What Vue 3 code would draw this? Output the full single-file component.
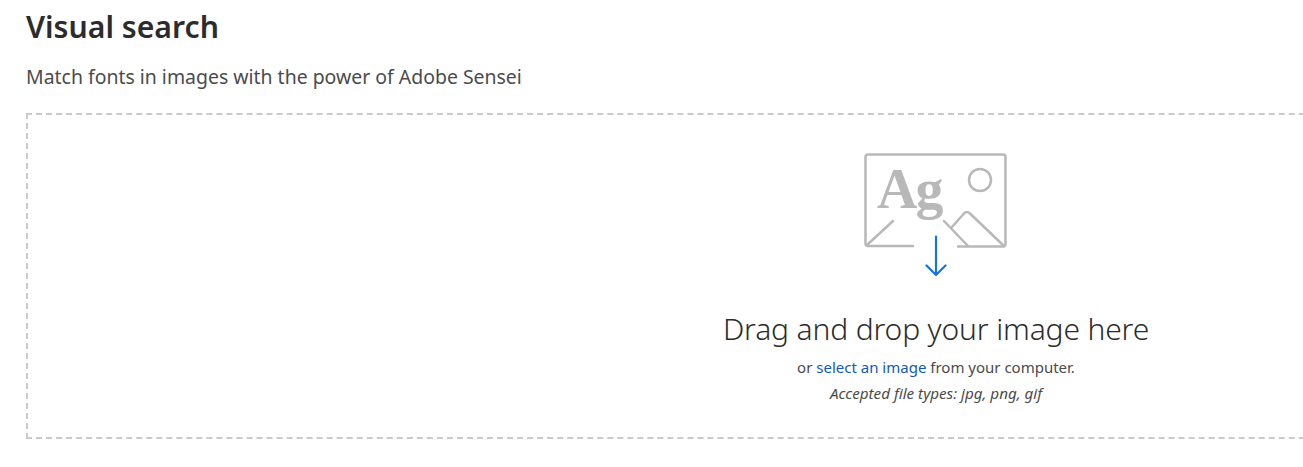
<script setup>
const fileTypes = "jpg, png, gif";
</script>

<template>
  <main class="page">
    <h1 class="title">Visual search</h1>
    <p class="subtitle">Match fonts in images with the power of Adobe Sensei</p>
    <section class="dropzone">
      <svg class="drop-icon" width="144" height="126" viewBox="864 153 144 126" fill="none">
        <g stroke="#b8b8b8" stroke-width="2.5" stroke-linecap="round" stroke-linejoin="round">
          <path d="M913 246H868a2.5 2.5 0 0 1-2.500-2.500V157a2.500 2.500 0 0 1 2.500-2.500H1003a2.500 2.500 0 0 1 2.500 2.500V244a2.500 2.500 0 0 1-2.500 2.500H958" />
          <circle cx="980" cy="180" r="11" />
          <path d="M867 245L893 221" />
          <path d="M944 221L968 246" />
          <path d="M952 227L964 213.500Q967 210.500 970 213.500L1004 246" />
        </g>
        <text class="icon-text" x="877" y="208">Ag</text>
        <path d="M936 236.500V275M926.500 265.500L936 275L945.500 265.500" stroke="#1473e6" stroke-width="2.200" stroke-linecap="round" stroke-linejoin="round" />
      </svg>
      <h2 class="headline">Drag and drop your image here</h2>
      <p class="line">or <a class="link" href="#">select an image</a> from your computer.</p>
      <p class="line types">Accepted file types: {{ fileTypes }}</p>
    </section>
  </main>
</template>

<style scoped>
.page {
  padding: 0 0 0 26px;
  width: 100vw;
  height: 100vh;
  overflow: hidden;
  box-sizing: border-box;
  font-family: "Noto Sans", "Open Sans", sans-serif;
  color: #2c2c2c;
}
.title {
  margin: 0;
  padding-top: 7px;
  font-size: 30.200px;
  line-height: 40px;
  font-weight: 600;
}
.subtitle {
  margin: 17px 0 0;
  font-size: 19.460px;
  line-height: 26px;
  color: #4b4b4b;
}
.dropzone {
  margin-top: 23px;
  width: 1820px;
  height: 326px;
  box-sizing: border-box;
  border: 2px dashed #cacaca;
  display: flex;
  flex-direction: column;
  align-items: center;
  padding-top: 38px;
}
.drop-icon {
  display: block;
}
.icon-text {
  font-family: "Liberation Serif", serif;
  font-weight: 700;
  font-size: 56px;
  letter-spacing: -2px;
  fill: #b8b8b8;
}
.headline {
  margin: 28px 0 0;
  font-size: 30px;
  line-height: 44px;
  font-weight: 300;
  letter-spacing: -0.150px;
  color: #2c2c2c;
}
.line {
  margin: 5px 0 0;
  font-size: 15px;
  line-height: 22px;
  color: #4b4b4b;
}
.types {
  margin-top: 4px;
  font-size: 15.200px;
  font-style: italic;
}
.link {
  color: #1259b3;
  text-decoration: none;
}
</style>

<style>
html, body {
  overflow: hidden;
  background: #fff;
}
</style>
